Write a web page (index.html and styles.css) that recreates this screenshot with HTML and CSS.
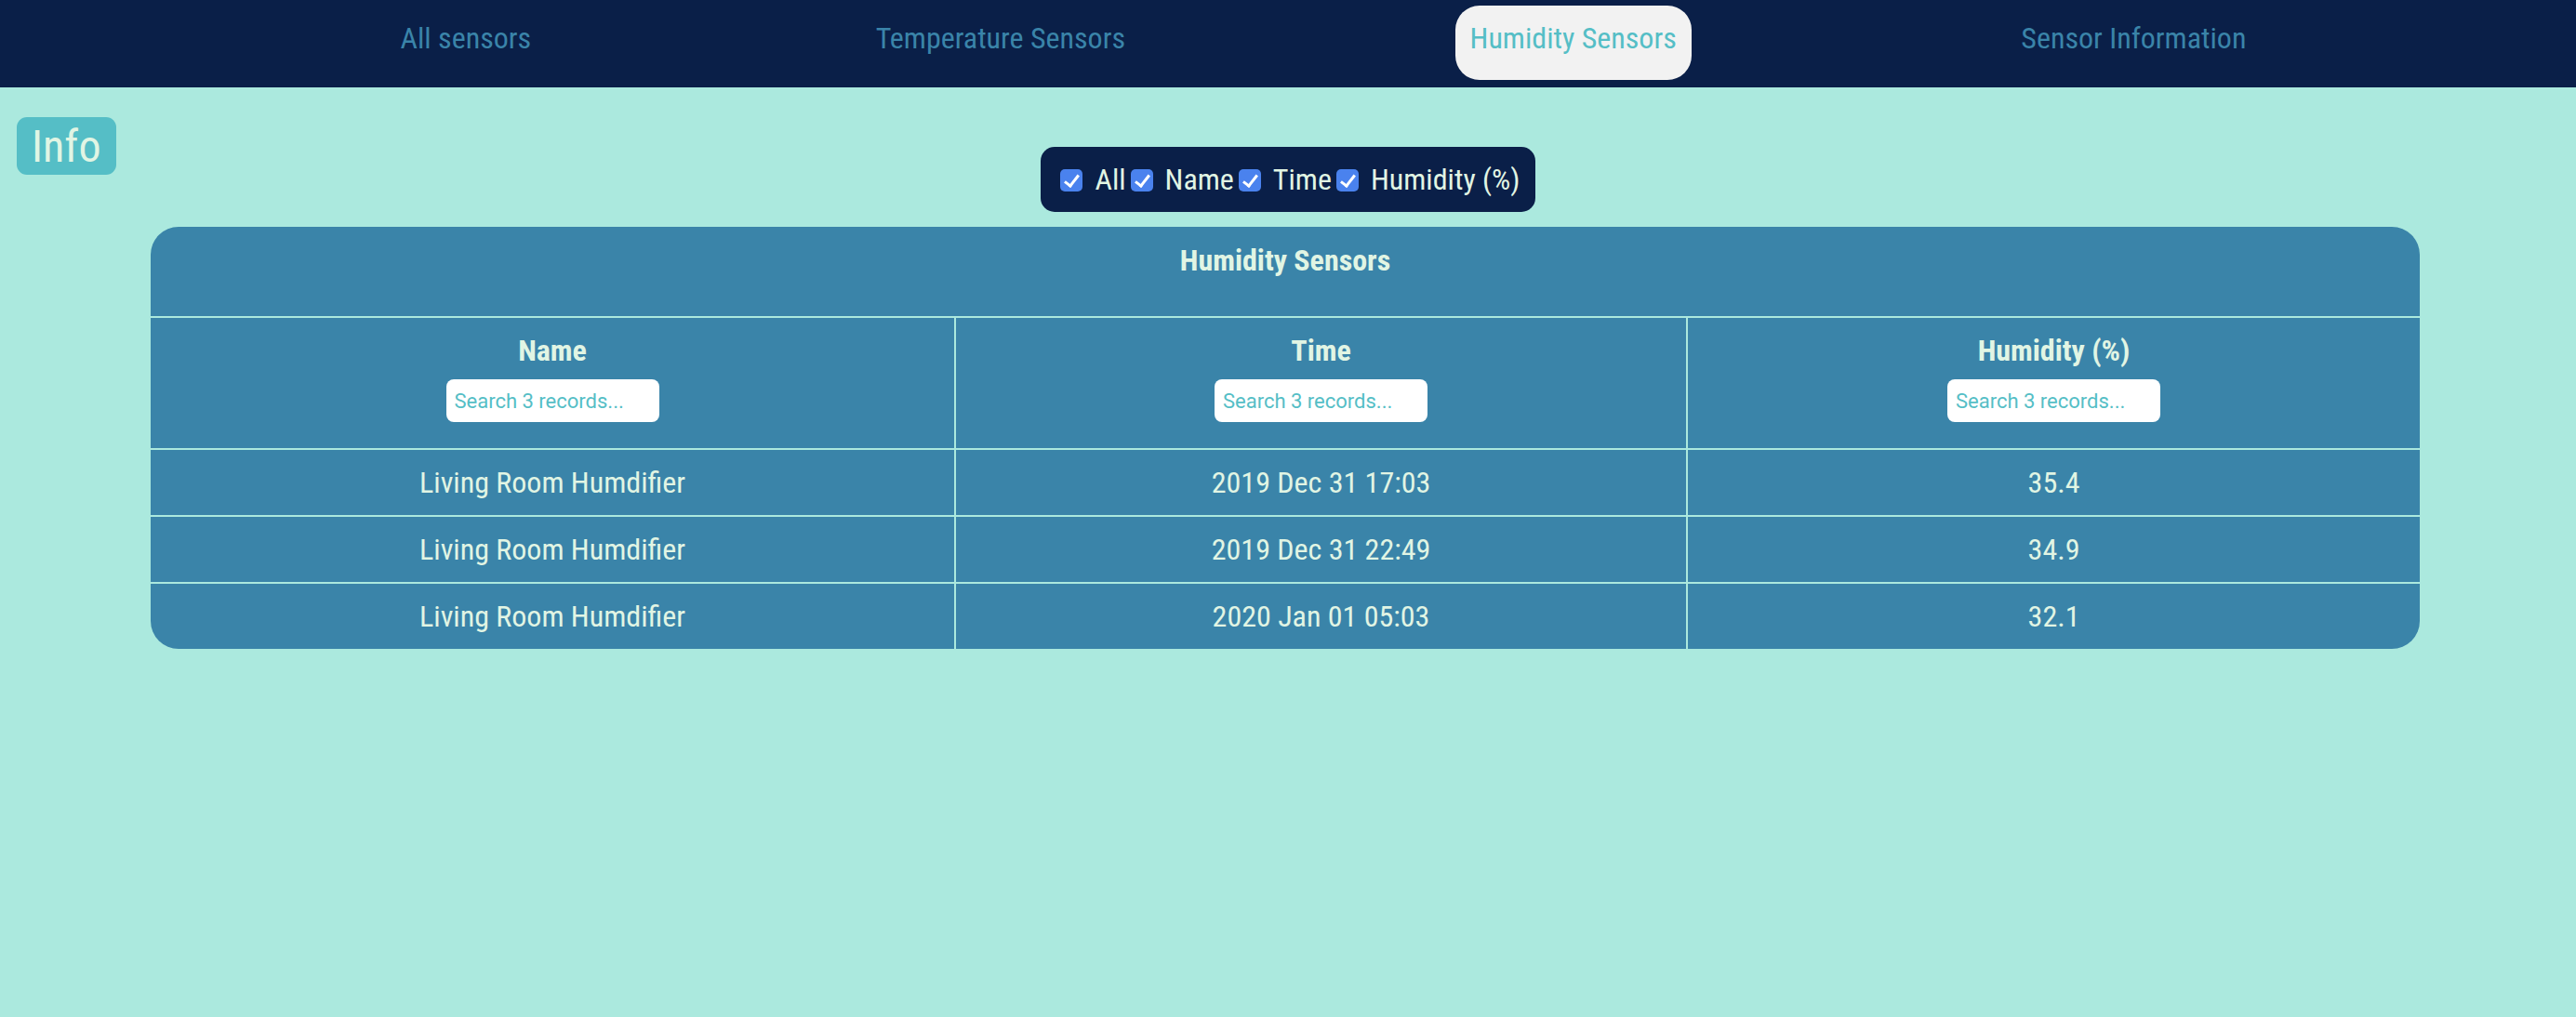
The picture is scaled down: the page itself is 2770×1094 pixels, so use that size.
FILE: index.html
```html
<!DOCTYPE html>
<html lang="en">
<head>
  <meta charset="UTF-8" />
  <meta name="viewport" content="width=device-width, initial-scale=1.0"/>
  <title>Humidity Sensors</title>
  <link rel="stylesheet" href="styles.css">
</head>
<body>
  <nav class="navbar">
    <a href="#" class="nav-link">All sensors</a>
    <a href="#" class="nav-link">Temperature Sensors</a>
    <a href="#" class="nav-link active">Humidity Sensors</a>
    <a href="#" class="nav-link">Sensor Information</a>
  </nav>

  <div class="toolbar">
    <button type="button" class="btn-info">Info</button>
    <div class="columnas">
      <input type="checkbox" id="colAll" checked /><label for="colAll">All</label>
      <input type="checkbox" id="colName" checked /><label for="colName">Name</label>
      <input type="checkbox" id="colTime" checked /><label for="colTime">Time</label>
      <input type="checkbox" id="colHum" checked /><label for="colHum">Humidity (%)</label>
    </div>
  </div>

  <div class="tabla-wrap">
    <table id="tablaSensores">
      <colgroup>
        <col class="col-name">
        <col class="col-time">
        <col class="col-hum">
      </colgroup>
      <thead>
        <tr>
          <th colspan="3" class="titulo">Humidity Sensors</th>
        </tr>
        <tr>
          <th>
            <div>Name</div>
            <input type="text" class="buscar" placeholder="Search 3 records..." />
          </th>
          <th>
            <div>Time</div>
            <input type="text" class="buscar" placeholder="Search 3 records..." />
          </th>
          <th>
            <div>Humidity (%)</div>
            <input type="text" class="buscar" placeholder="Search 3 records..." />
          </th>
        </tr>
      </thead>
      <tbody>
        <tr>
          <td>Living Room Humdifier</td>
          <td>2019 Dec 31 17:03</td>
          <td>35.4</td>
        </tr>
        <tr>
          <td>Living Room Humdifier</td>
          <td>2019 Dec 31 22:49</td>
          <td>34.9</td>
        </tr>
        <tr>
          <td>Living Room Humdifier</td>
          <td>2020 Jan 01 05:03</td>
          <td>32.1</td>
        </tr>
      </tbody>
    </table>
  </div>
</body>
</html>
```

FILE: styles.css
```css
body {
  font-family: "Roboto Condensed", "DejaVu Sans Condensed", Roboto, sans-serif;
  font-stretch: condensed;
  margin: 0;
  background-color: #abe9de;
  color: #e1f5e4;
}
.navbar {
  display: flex;
  justify-content: space-evenly;
  align-items: flex-start;
  height: 94px;
  padding-left: 76px;
  background-color: #0a1f48;
  box-sizing: border-box;
}
.nav-link {
  margin-top: 6px;
  padding: 16px 16px 26px 16px;
  font-size: 32px;
  line-height: 38px;
  color: #3a84a9;
  text-decoration: none;
  border-radius: 26px;
}
.nav-link.active {
  background-color: #f2f2f2;
  color: #55bec6;
}
.toolbar {
  display: grid;
  grid-template-columns: 1fr auto 1fr;
  align-items: start;
  padding-top: 32px;
}
.btn-info {
  justify-self: start;
  margin-left: 18px;
  padding: 0 16px;
  height: 62px;
  border: none;
  border-radius: 11px;
  background-color: #55bec6;
  color: #e1f5e4;
  font-family: inherit;
  font-size: 48px;
  font-weight: 400;
  cursor: pointer;
}
.columnas {
  display: flex;
  align-items: center;
  margin-top: 32px;
  height: 70px;
  padding: 0 16px 0 21px;
  background-color: #0a1f48;
  border-radius: 15px;
  font-size: 32px;
  box-sizing: border-box;
}
.columnas input {
  appearance: none;
  width: 24px;
  height: 24px;
  margin: 2px 13px 0 0;
  border-radius: 5px;
  background-color: #4a82ee;
  position: relative;
}
.columnas input:checked::after {
  content: "";
  position: absolute;
  left: 8px;
  top: 3px;
  width: 6px;
  height: 13px;
  border: solid white;
  border-width: 0 3px 3px 0;
  transform: rotate(38deg);
}
.columnas label {
  margin-right: 5px;
}
.columnas label:last-child {
  margin-right: 0;
}
.tabla-wrap {
  width: 2440px;
  margin: 16px 0 0 162px;
  background-color: #3a84a9;
  border-radius: 30px;
  overflow: hidden;
}
table {
  width: 100%;
  table-layout: fixed;
  border-collapse: separate;
  border-spacing: 0;
  font-size: 32px;
  line-height: 39px;
}
.col-name {
  width: 866px;
}
.col-time, .col-hum {
  width: 787px;
}
th, td {
  text-align: center;
  border-bottom: 2px solid #abe9de;
  border-right: 2px solid #abe9de;
}
th:last-child, td:last-child {
  border-right: none;
}
tbody tr:last-child td {
  border-bottom: none;
}
th {
  padding: 16px 0 28px 0;
  font-weight: bold;
}
th.titulo {
  padding: 17px 0 40px 0;
  border-right: none;
}
td {
  padding: 16px 0 15px 0;
}
.buscar {
  display: block;
  margin: 11px auto 0 auto;
  width: 229px;
  height: 46px;
  padding: 0 9px;
  border: none;
  border-radius: 8px;
  background: white;
  font-family: Roboto, sans-serif;
  font-size: 22px;
  box-sizing: border-box;
}
.buscar::placeholder {
  color: #55bec6;
}
```
